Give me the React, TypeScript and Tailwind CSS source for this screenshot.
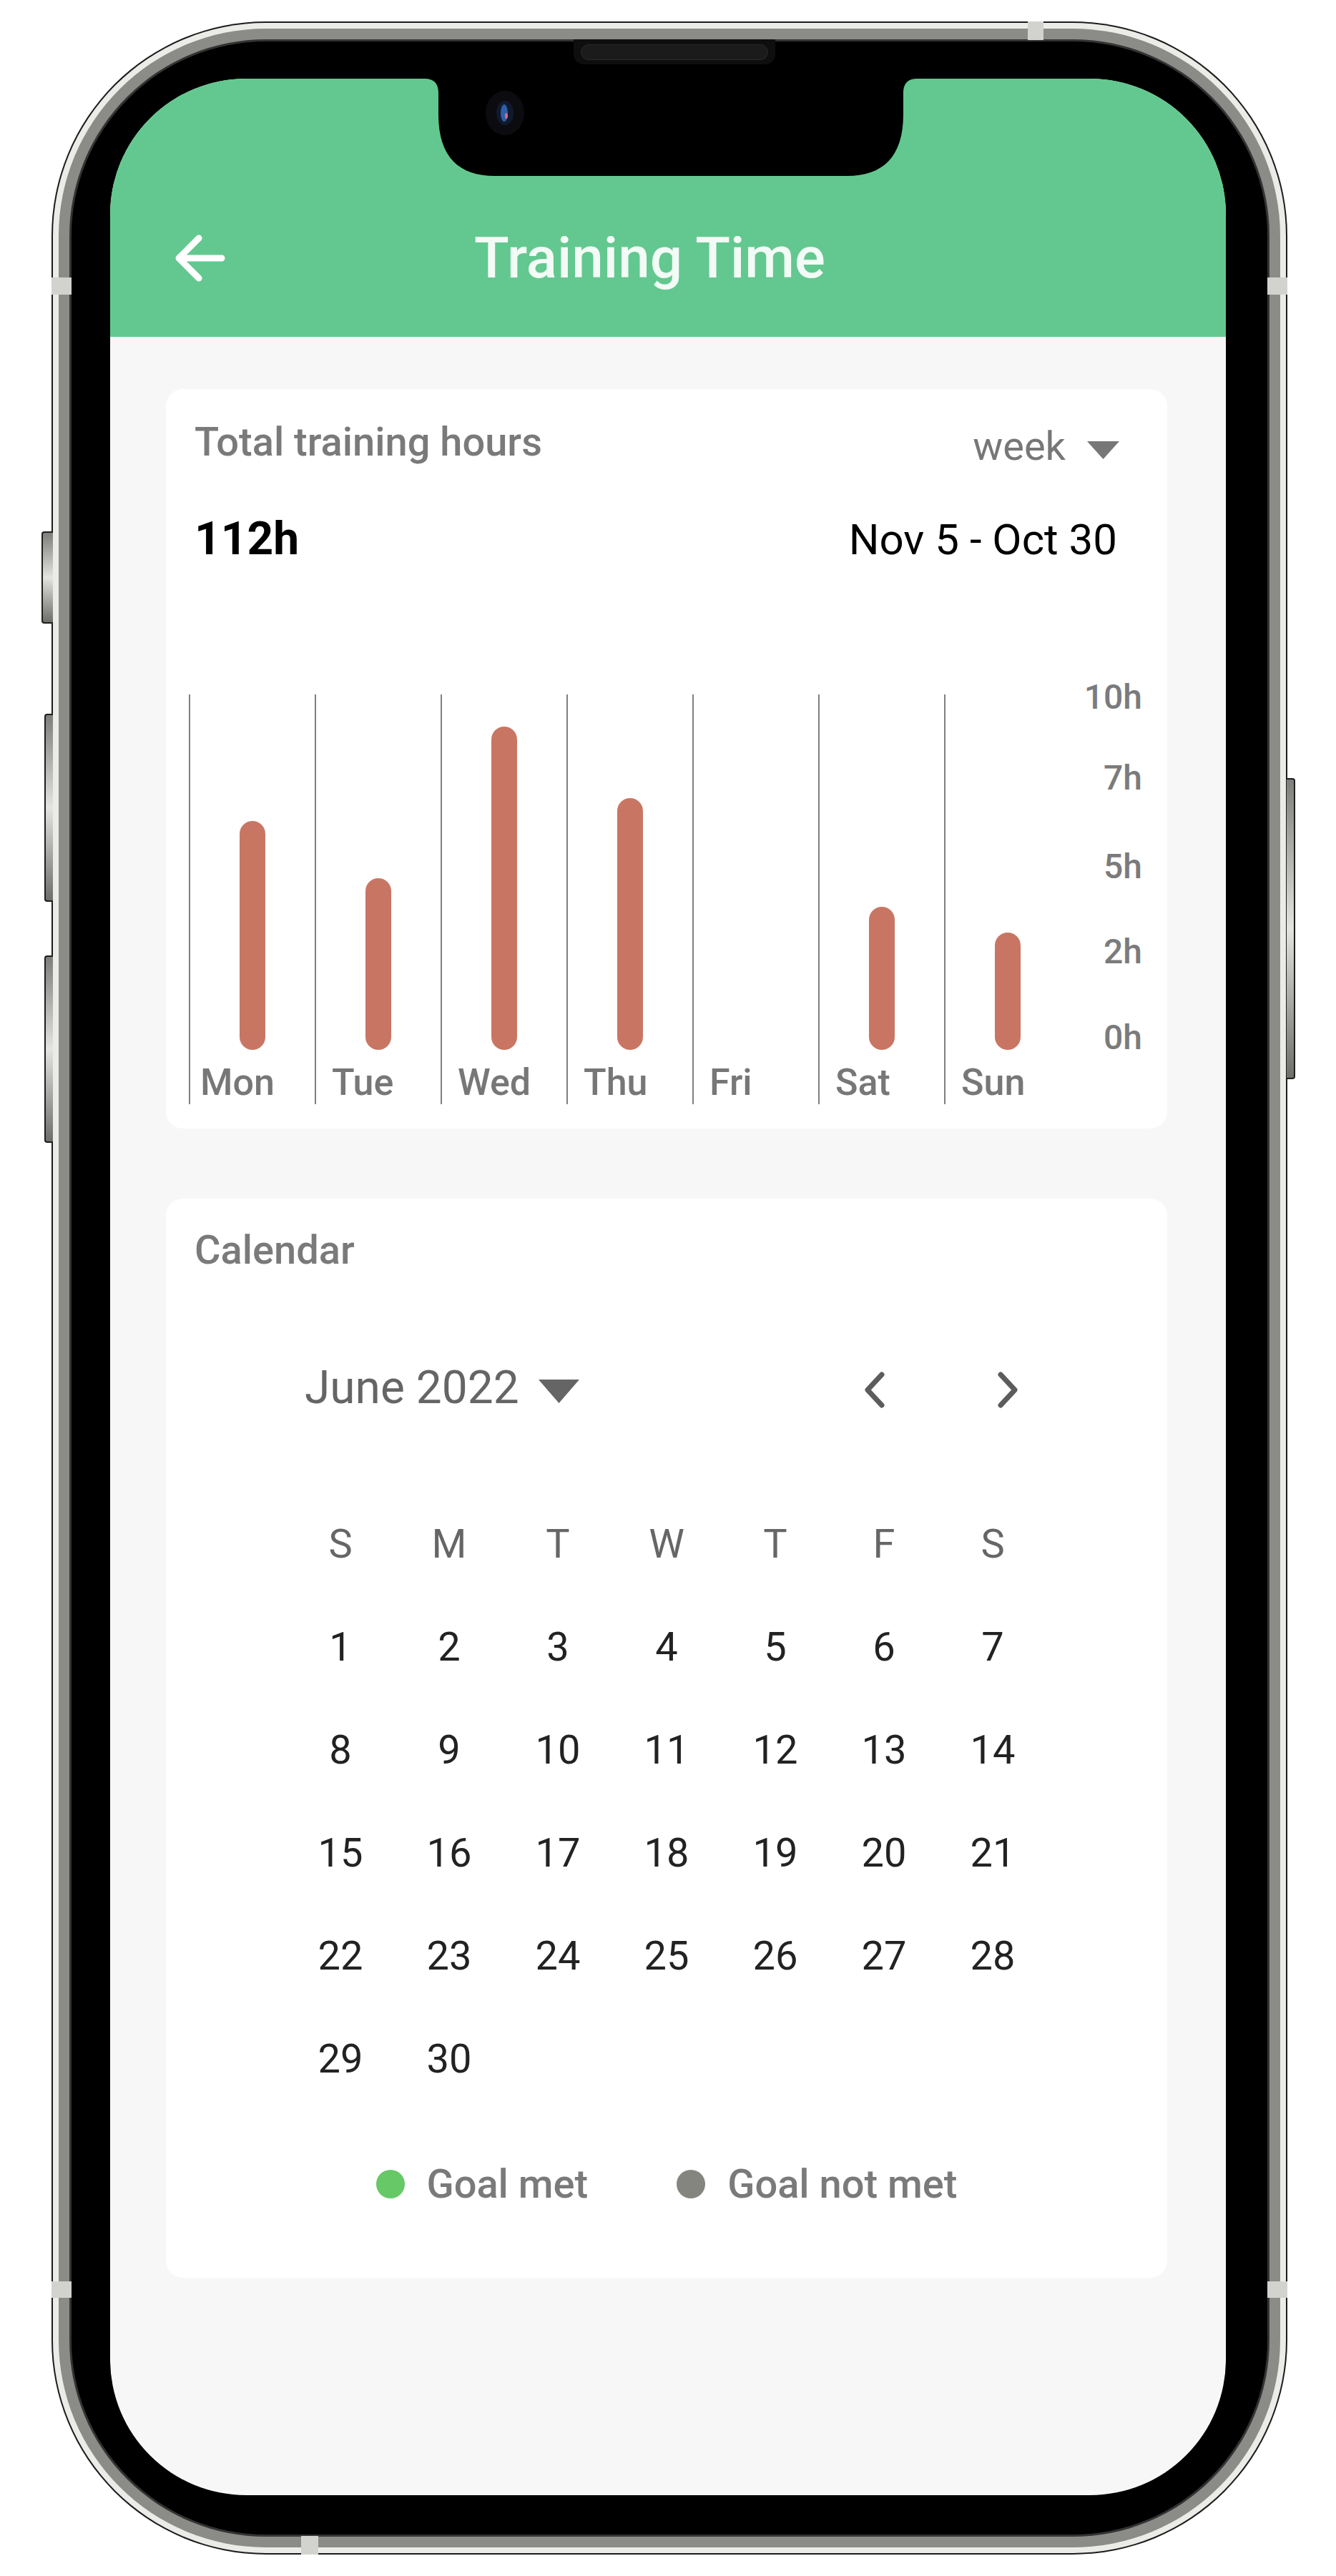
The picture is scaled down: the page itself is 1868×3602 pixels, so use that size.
import type { SVGProps } from 'react'

// Weekly training hours, one column per day. Heights are the bar lengths in px.
const week = [
  { day: 'Mon', bar: 'h-[320px]', pad: 'pl-[14px]' },
  { day: 'Tue', bar: 'h-[240px]', pad: 'pl-[22px]' },
  { day: 'Wed', bar: 'h-[452px]', pad: 'pl-[22px]' },
  { day: 'Thu', bar: 'h-[352px]', pad: 'pl-[22px]' },
  { day: 'Fri', bar: 'h-0', pad: 'pl-[22px]' },
  { day: 'Sat', bar: 'h-[200px]', pad: 'pl-[22px]' },
  { day: 'Sun', bar: 'h-[164px]', pad: 'pl-[22px]' },
]

// Axis ticks, top to bottom, with the spacing above each one.
const ticks = [
  { label: '10h', gap: '' },
  { label: '7h', gap: 'mt-[65px]' },
  { label: '5h', gap: 'mt-[76px]' },
  { label: '2h', gap: 'mt-[71px]' },
  { label: '0h', gap: 'mt-[72px]' },
]

const weekdays = ['S', 'M', 'T', 'W', 'T', 'F', 'S']
const days = Array.from({ length: 30 }, (_, i) => i + 1)

function Caret(props: SVGProps<SVGSVGElement>) {
  return (
    <svg viewBox="0 0 20 11" preserveAspectRatio="none" {...props}>
      <polygon points="0,0 20,0 10,11" />
    </svg>
  )
}

function BackArrow() {
  return (
    <svg width="74" height="70" viewBox="0 0 74 70" fill="none">
      <path
        d="M67 35H8M35 7L7 35L35 63"
        stroke="#ffffff"
        strokeWidth="9"
        strokeLinecap="round"
        strokeLinejoin="round"
      />
    </svg>
  )
}

function Chevron({ dir }: { dir: 'left' | 'right' }) {
  return (
    <svg width="40" height="60" viewBox="0 0 40 60" fill="none">
      <path
        d={dir === 'left' ? 'M30 8L10 29.5L30 51' : 'M10 8L30 29.5L10 51'}
        stroke="#5c5c5c"
        strokeWidth="7"
        strokeLinecap="round"
        strokeLinejoin="round"
      />
    </svg>
  )
}

// Notch cut-out with the front camera, laid over the top of the screen.
function Notch() {
  return (
    <svg
      className="absolute left-[440px] top-0"
      width="688"
      height="136"
      viewBox="0 0 688 136"
    >
      <path
        d="M0 0H688C676 0 669 6 669 20V50C669 110 640 136 590 136H98C48 136 19 110 19 50V20C19 6 12 0 0 0Z"
        fill="#000"
      />
      <ellipse cx="112" cy="48" rx="27" ry="31" fill="#0c0c10" />
      <ellipse cx="112" cy="48" rx="12" ry="17" fill="#101a2c" />
      <ellipse cx="111" cy="48" rx="5" ry="12" fill="#2c5fa8" />
      <ellipse cx="114" cy="52" rx="2" ry="4" fill="#d86a8a" />
    </svg>
  )
}

function Header() {
  return (
    <header className="h-[361px] bg-[#63c88f] pt-[211px]">
      <div className="flex h-[80px] items-center pl-[89px]">
        <BackArrow />
        <h1 className="ml-[346px] text-[80px] font-medium leading-[80px] text-[#f3fbf6]">
          Training Time
        </h1>
      </div>
    </header>
  )
}

function HoursCard() {
  return (
    <section className="w-[1400px] rounded-[24px] bg-white pb-[34px] pt-[46px]">
      <div className="flex h-[56px] items-start justify-between pl-[40px] pr-[67px]">
        <h2 className="text-[56px] font-medium leading-[56px] text-[#7a7a7a]">
          Total training hours
        </h2>
        <div className="mt-[6px] flex items-start gap-[30px]">
          <span className="text-[56px] leading-[56px] text-[#777777]">week</span>
          <Caret className="mt-[21px] h-[25px] w-[45px] fill-[#777777]" />
        </div>
      </div>

      <div className="mt-[76px] flex h-[64px] items-baseline justify-between pl-[40px] pr-[70px]">
        <span className="text-[64px] font-bold leading-[64px] text-black">112h</span>
        <span className="text-[60px] leading-[60px] text-black">Nov 5 - Oct 30</span>
      </div>

      {/* Bar chart: day columns with a left rule, axis labels on the right */}
      <div className="mt-[165px] flex pl-[32px]">
        <div className="mt-[20px] flex">
          {week.map((d) => (
            <div
              key={d.day}
              className="flex h-[573px] w-[176px] flex-col border-l-2 border-[#808080]"
            >
              <div className="flex h-[497px] items-end justify-center">
                <div className={'w-[36px] rounded-full bg-[#c87663] ' + d.bar} />
              </div>
              <span
                className={
                  'mt-[20px] text-[52px] font-medium leading-[52px] text-[#777777] ' + d.pad
                }
              >
                {d.day}
              </span>
            </div>
          ))}
        </div>
        <div className="flex w-[101px] flex-col items-end">
          {ticks.map((t) => (
            <span
              key={t.label}
              className={'text-[48px] font-medium leading-[48px] text-[#7b7b7b] ' + t.gap}
            >
              {t.label}
            </span>
          ))}
        </div>
      </div>
    </section>
  )
}

function CalendarCard() {
  return (
    <section className="mt-[98px] w-[1400px] rounded-[24px] bg-white pb-[103px] pt-[44px]">
      <h2 className="pl-[40px] text-[56px] font-medium leading-[56px] text-[#7a7a7a]">
        Calendar
      </h2>

      <div className="mt-[133px] flex items-start pl-[194px] pr-[203px]">
        <span className="text-[64px] leading-[64px] text-[#656565]">June 2022</span>
        <Caret className="ml-[27px] mt-[20px] h-[33px] w-[57px] fill-[#656565]" />
        <div className="ml-auto mt-[5px] flex gap-[146px]">
          <Chevron dir="left" />
          <Chevron dir="right" />
        </div>
      </div>

      <div className="mx-auto mt-[157px] grid w-[1064px] grid-cols-7 gap-y-[88px]">
        {weekdays.map((w, i) => (
          <span
            key={'w' + i}
            className="text-center text-[56px] leading-[56px] text-[#666666]"
          >
            {w}
          </span>
        ))}
        {days.map((n) => (
          <span key={n} className="text-center text-[56px] leading-[56px] text-[#222222]">
            {n}
          </span>
        ))}
      </div>

      <div className="mt-[119px] flex items-center justify-center gap-[124px]">
        <div className="flex items-center gap-[31px]">
          <span className="h-[40px] w-[40px] rounded-full bg-[#67c867]" />
          <span className="text-[56px] font-medium leading-[56px] text-[#7a7a7a]">
            Goal met
          </span>
        </div>
        <div className="flex items-center gap-[31px]">
          <span className="h-[40px] w-[40px] rounded-full bg-[#858580]" />
          <span className="text-[56px] font-medium leading-[56px] text-[#7a7a7a]">
            Goal not met
          </span>
        </div>
      </div>
    </section>
  )
}

export default function App() {
  return (
    <div className="relative h-[3602px] w-[1868px] overflow-hidden bg-white pl-[72px] pt-[30px] font-['Roboto',sans-serif]">
      {/* Phone body: outline, highlight, metal band, inner edge, bezel */}
      <div className="w-[1728px] rounded-[300px] bg-[#1c1c1c] p-[2px]">
        <div className="rounded-[298px] bg-[#ebebe8] p-[8px]">
          <div className="rounded-[290px] bg-[#8b8c87] p-[15px]">
            <div className="rounded-[275px] bg-[#333333] p-[3px]">
              <div className="rounded-[272px] bg-black pb-[55px] pl-[54px] pr-[58px] pt-[52px]">
                <div className="relative h-[3379px] w-[1560px] overflow-hidden rounded-[190px] bg-[#f7f7f7]">
                  <Header />
                  <main className="pl-[78px] pt-[73px]">
                    <HoursCard />
                    <CalendarCard />
                  </main>
                  <Notch />
                </div>
              </div>
            </div>
          </div>
        </div>
      </div>

      {/* Earpiece grille */}
      <div className="absolute left-[802px] top-[55px] flex h-[35px] w-[282px] items-center justify-center rounded-b-[14px] bg-[#0e0e0e]">
        <div className="h-[22px] w-[262px] rounded-full border border-[#2a2a2a] bg-[#1b1b1b]" />
      </div>

      {/* Antenna bands on the metal frame */}
      <div className="absolute left-[1437px] top-[30px] h-[26px] w-[22px] bg-[#d2d2cf]" />
      <div className="absolute left-[421px] top-[3546px] h-[26px] w-[24px] bg-[#d2d2cf]" />
      <div className="absolute left-[72px] top-[388px] h-[24px] w-[28px] bg-[#d2d2cf]" />
      <div className="absolute left-[1772px] top-[388px] h-[24px] w-[28px] bg-[#d2d2cf]" />
      <div className="absolute left-[72px] top-[3190px] h-[23px] w-[28px] bg-[#d2d2cf]" />
      <div className="absolute left-[1772px] top-[3190px] h-[23px] w-[28px] bg-[#d2d2cf]" />

      {/* Side buttons */}
      <div className="absolute left-[58px] top-[743px] h-[129px] w-[16px] rounded-l-[4px] border-2 border-r-0 border-[#1e1e1e] bg-linear-to-b from-[#7e7e7a] via-[#e4e4e1] to-[#6e6e6a]" />
      <div className="absolute left-[62px] top-[998px] h-[263px] w-[12px] rounded-l-[4px] border-2 border-r-0 border-[#1e1e1e] bg-linear-to-b from-[#7e7e7a] via-[#e4e4e1] to-[#6e6e6a]" />
      <div className="absolute left-[62px] top-[1336px] h-[262px] w-[12px] rounded-l-[4px] border-2 border-r-0 border-[#1e1e1e] bg-linear-to-b from-[#7e7e7a] via-[#e4e4e1] to-[#6e6e6a]" />
      <div className="absolute left-[1799px] top-[1088px] h-[421px] w-[12px] rounded-r-[4px] border-2 border-l-0 border-[#1e1e1e] bg-linear-to-b from-[#7e7e7a] via-[#e4e4e1] to-[#6e6e6a]" />
    </div>
  )
}
